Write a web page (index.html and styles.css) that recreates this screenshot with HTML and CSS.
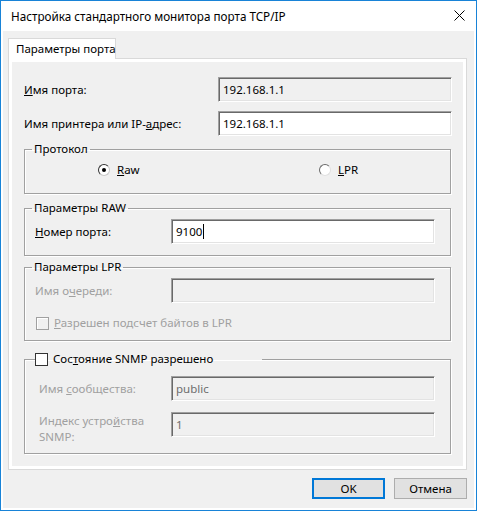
FILE: index.html
```html
<!DOCTYPE html>
<html lang="ru">
<head>
    <meta charset="UTF-8">
    <title>Настройка стандартного монитора порта TCP/IP</title>
    <link rel="stylesheet" href="styles.css">
</head>
<body>
    <div class="window">
        <div class="titlebar">
            <span class="title">Настройка стандартного монитора порта TCP/IP</span>
            <svg class="close" width="11" height="11" viewBox="0 0 11 11">
                <path d="M0.5 0.5 L10.5 10.5 M10.5 0.5 L0.5 10.5" stroke="#000" stroke-width="1" fill="none"/>
            </svg>
        </div>

        <div class="client">
            <div class="tabs">
                <div class="tab">Параметры порта</div>
            </div>

            <div class="tab-page">
                <div class="page-body">
                    <div class="row">
                        <span class="label"><u>И</u>мя порта:</span>
                        <div class="field readonly">192.168.1.1</div>
                    </div>
                    <div class="row row-gap">
                        <span class="label">Имя принтера или IP-<u>а</u>дрес:</span>
                        <div class="field">192.168.1.1</div>
                    </div>

                    <fieldset class="group group-protocol">
                        <legend>Протокол</legend>
                        <div class="radios">
                            <span class="radio-item radio-raw"><span class="radio checked"></span><span><u>R</u>aw</span></span>
                            <span class="radio-item"><span class="radio"></span><span><u>L</u>PR</span></span>
                        </div>
                    </fieldset>

                    <fieldset class="group group-raw">
                        <legend>Параметры RAW</legend>
                        <div class="group-row">
                            <span class="label"><u>Н</u>омер порта:</span>
                            <div class="field field-short">9100<span class="caret"></span></div>
                        </div>
                    </fieldset>

                    <fieldset class="group group-lpr">
                        <legend>Параметры LPR</legend>
                        <div class="group-row">
                            <span class="label disabled">Имя о<u>ч</u>ереди:</span>
                            <div class="field field-short readonly"></div>
                        </div>
                        <div class="check-row disabled">
                            <span class="checkbox off"></span><span><u>Р</u>азрешен подсчет байтов в LPR</span>
                        </div>
                    </fieldset>

                    <fieldset class="group group-snmp">
                        <legend class="check-legend">
                            <span class="checkbox"></span><span>Сос<u>т</u>ояние SNMP разрешено</span>
                        </legend>
                        <div class="group-row">
                            <span class="label disabled indent">Имя <u>с</u>ообщества:</span>
                            <div class="field field-short readonly dim">public</div>
                        </div>
                        <div class="group-row row-top">
                            <span class="label disabled indent two-line">Индекс устро<u>й</u>ства<br>SNMP:</span>
                            <div class="field field-short readonly dim">1</div>
                        </div>
                    </fieldset>
                </div>
            </div>

            <div class="buttons">
                <button class="btn btn-default">OK</button>
                <button class="btn">Отмена</button>
            </div>
        </div>
    </div>
</body>
</html>
```

FILE: styles.css
```css
* {
    margin: 0;
    padding: 0;
    box-sizing: border-box;
}

body {
    font-family: 'Noto Sans', 'Liberation Sans', sans-serif;
    font-size: 11.5px;
    line-height: 16px;
    color: #000;
    background: #fff;
}

u {
    text-underline-offset: 1px;
}

.window {
    width: 477px;
    height: 511px;
    border: 1px solid #1883d7;
    background: #fff;
    display: flex;
    flex-direction: column;
}

.titlebar {
    height: 30px;
    display: flex;
    align-items: center;
    justify-content: space-between;
    padding: 0 11px 0 10px;
}

.title {
    font-size: 11.7px;
}

.close {
    display: block;
    margin-top: -1px;
}

.client {
    flex: 1;
    margin: 0 2px 2px;
    background: #f0f0f0;
    padding: 7px 7px 7px 5px;
    display: flex;
    flex-direction: column;
}

.tabs {
    display: flex;
}

.tab {
    position: relative;
    z-index: 1;
    width: 108px;
    height: 21px;
    margin-bottom: -1px;
    padding: 2px 0 0 7px;
    white-space: nowrap;
    background: #fff;
    border: 1px solid #d9d9d9;
    border-bottom: none;
}

.tab-page {
    border: 1px solid #d9d9d9;
    background: #fff;
    padding: 3px;
}

.page-body {
    background: #f0f0f0;
    padding: 15px 0 12px;
}

.row {
    display: flex;
    align-items: center;
    padding: 0 11px 0 12px;
}

.row-gap {
    margin-top: 9px;
}

.label {
    flex: 1;
}

.disabled {
    color: #a0a0a0;
}

.indent {
    padding-left: 4px;
}

.field {
    width: 234px;
    height: 25px;
    padding: 0 4px;
    display: flex;
    align-items: center;
    background: #fff;
    border: 1px solid;
    border-color: #a0a0a0 #fff #fff #a0a0a0;
    box-shadow: inset 1px 1px 0 #696969, inset -1px -1px 0 #e3e3e3;
}

.field-short {
    width: 264px;
}

.readonly {
    background: #f0f0f0;
}

.dim {
    color: #6d6d6d;
}

.caret {
    display: inline-block;
    width: 1px;
    height: 15px;
    margin-left: 1px;
    background: #000;
}

.group {
    margin: 0 12px;
    border: 1px solid #a0a0a0;
    box-shadow: inset 1px 1px 0 #fff, 1px 1px 0 #fff;
    padding: 0 15px 0 10px;
}

.group legend {
    margin-left: -3px;
    padding: 0 2px;
}

.group-protocol {
    margin-top: 5px;
    padding-bottom: 15px;
}

.radios {
    display: flex;
    margin-top: 5px;
    padding-left: 63px;
}

.radio-item {
    display: flex;
    align-items: center;
    gap: 7px;
}

.radio-raw {
    width: 221px;
}

.radio {
    width: 12px;
    height: 12px;
    border-radius: 50%;
    border: 1px solid;
    border-color: #6a6a6a #e0e0e0 #e0e0e0 #6a6a6a;
    background: #fff;
    display: flex;
    align-items: center;
    justify-content: center;
}

.radio.checked {
    border-color: #333 #c8c8c8 #c8c8c8 #333;
}

.radio.checked::after {
    content: "";
    width: 4px;
    height: 4px;
    border-radius: 50%;
    background: #000;
}

.group-raw {
    margin-top: 6px;
    padding-bottom: 11px;
}

.group-row {
    display: flex;
    align-items: center;
    margin-top: 3px;
}

.group-lpr {
    margin-top: 3px;
    padding-bottom: 9px;
}

.check-row {
    display: flex;
    align-items: center;
    gap: 5px;
    margin-top: 12px;
    padding-left: 1px;
}

.checkbox {
    width: 13px;
    height: 13px;
    flex-shrink: 0;
    background: #fff;
    border: 1px solid #333;
}

.checkbox.off {
    background: #f0f0f0;
    border-color: #a0a0a0;
    box-shadow: inset 1px 1px 0 #fff;
}

.group-snmp {
    margin-top: 10px;
    padding-bottom: 8px;
}

.group-snmp .check-legend {
    display: flex;
    align-items: center;
    gap: 5px;
    width: 227px;
    margin-left: 0;
    padding: 0;
    white-space: nowrap;
}

.group-snmp .group-row:first-of-type {
    margin-top: 9px;
}

.row-top {
    align-items: flex-start;
    margin-top: 11px;
}

.two-line {
    padding-top: 1px;
}

.buttons {
    display: flex;
    justify-content: flex-end;
    gap: 9px;
    margin-top: 8px;
}

.btn {
    width: 73px;
    height: 21px;
    font-family: inherit;
    font-size: 11.5px;
    color: #000;
    background: #e1e1e1;
    border: 1px solid #adadad;
}

.btn-default {
    border: 2px solid #0078d7;
}
```
